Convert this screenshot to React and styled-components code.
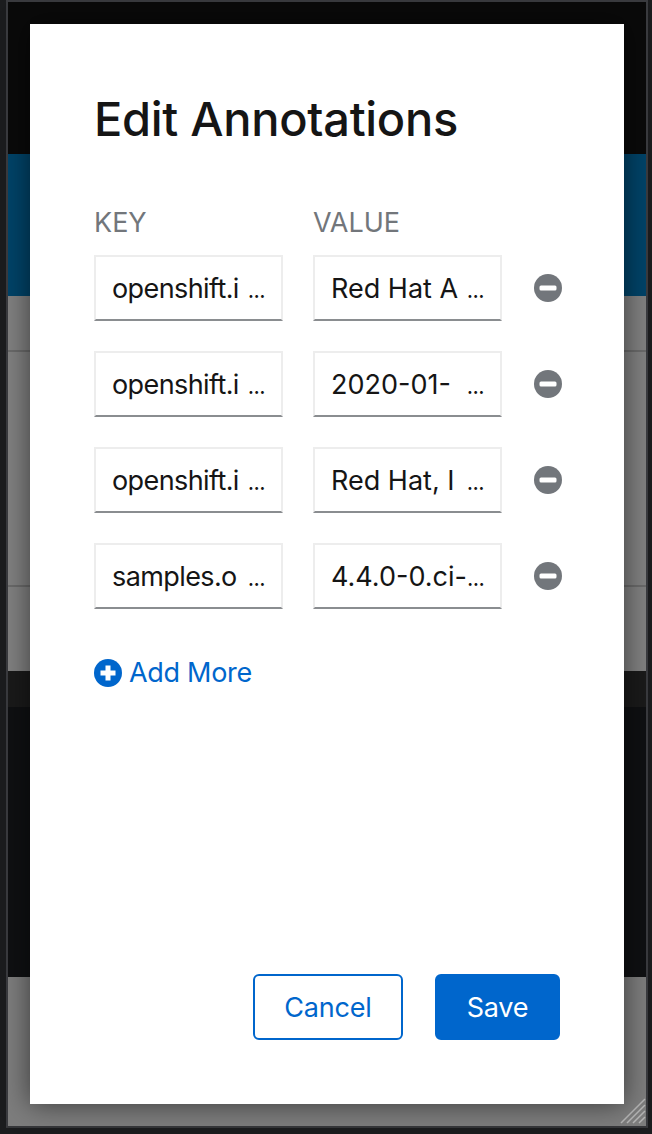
import React from 'react'
import styled, { createGlobalStyle } from 'styled-components'

const GlobalStyle = createGlobalStyle`
  html, body {
    margin: 0;
    padding: 0;
    background: #1b1c1e;
  }
  body {
    font-family: Inter, "Liberation Sans", sans-serif;
  }
`

const Frame = styled.div`
  position: relative;
  width: 652px;
  height: 1134px;
  box-sizing: border-box;
  padding: 0 4px 0 6px;
  background: #1b1c1e;
  overflow: hidden;
`

const Backdrop = styled.div`
  height: 1128px;
  box-sizing: border-box;
  display: flex;
  flex-direction: column;
  border: 2px solid #3a3b3f;
  border-bottom: 2px solid #36373a;
`

const Band = styled.div`
  height: ${(props) => props.h}px;
  flex: none;
  background: ${(props) => props.bg};
  ${(props) => props.line && 'border-bottom: 2px solid #6a6a6a; box-sizing: border-box;'}
`

const Dialog = styled.div`
  position: absolute;
  left: 30px;
  top: 24px;
  width: 594px;
  height: 1080px;
  box-sizing: border-box;
  padding: 68px 64px 64px;
  display: flex;
  flex-direction: column;
  background: #fff;
  box-shadow: 0 0 26px rgba(3, 3, 3, 0.55);
`

const Title = styled.h1`
  margin: 0;
  font-size: 47px;
  line-height: 54px;
  font-weight: 500;
  letter-spacing: -0.3px;
  color: #151515;
`

const Grid = styled.div`
  margin-top: 59px;
  display: grid;
  grid-template-columns: 189px 189px 28px;
  column-gap: 30px;
  row-gap: 30px;
  align-items: center;
`

const HeadRow = styled.div`
  display: contents;
`

const Label = styled.div`
  height: 36px;
  margin-bottom: -16px;
  font-size: 27px;
  line-height: 36px;
  color: #72767b;
`

const Field = styled.div`
  height: 66px;
  box-sizing: border-box;
  padding: 0 16px 0 16px;
  display: flex;
  align-items: center;
  justify-content: space-between;
  border: 2px solid #ededed;
  border-bottom-color: #8a8d90;
  font-size: 27px;
  letter-spacing: ${(props) => (props.narrow ? '-0.6px' : '0')};
  color: #151515;
  white-space: nowrap;
  overflow: hidden;
`

const Dots = styled.span`
  flex: none;
  font-size: 22px;
  letter-spacing: -0.6px;
  align-self: center;
  padding-top: 3px;
`

const RemoveBtn = styled.button`
  width: 28px;
  height: 28px;
  margin-left: 2px;
  padding: 0;
  border: 0;
  background: none;
  display: block;
`

const AddLink = styled.div`
  margin-top: 47px;
  display: flex;
  align-items: center;
  gap: 7px;
  font-size: 27px;
  line-height: 34px;
  letter-spacing: -0.3px;
  color: #06c;
`

const Footer = styled.div`
  margin-top: auto;
  display: flex;
  justify-content: flex-end;
  gap: 32px;
`

const Button = styled.button`
  height: 66px;
  width: ${(props) => props.w}px;
  padding: 0;
  box-sizing: border-box;
  border-radius: 6px;
  border: 2px solid #06c;
  background: ${(props) => (props.primary ? '#06c' : '#fff')};
  color: ${(props) => (props.primary ? '#fff' : '#06c')};
  font-family: inherit;
  font-size: 27px;
  letter-spacing: -0.2px;
`

const Grip = styled.svg`
  position: absolute;
  right: 6px;
  bottom: 10px;
  width: 26px;
  height: 26px;
`

const rows = [
  ['openshift.i', 'Red Hat A'],
  ['openshift.i', '2020-01-'],
  ['openshift.i', 'Red Hat, I'],
  ['samples.o', '4.4.0-0.ci-'],
]

const MinusIcon = () => (
  <svg width="28" height="28" viewBox="0 0 28 28">
    <circle cx="14" cy="14" r="14" fill="#72767b" />
    <rect x="5.5" y="11.5" width="17" height="5" rx="1.5" fill="#fff" />
  </svg>
)

const PlusIcon = () => (
  <svg width="28" height="28" viewBox="0 0 28 28">
    <circle cx="14" cy="14" r="14" fill="#06c" />
    <path d="M11.5 6.5h5v5h5v5h-5v5h-5v-5h-5v-5h5z" fill="#fff" />
  </svg>
)

const App = () => {
  return (
    <>
      <GlobalStyle />
      <Frame>
        <Backdrop>
          <Band h={152} bg="#0a0a0a" />
          <Band h={142} bg="#004368" />
          <Band h={56} bg="#808080" line />
          <Band h={235} bg="#808080" line />
          <Band h={84} bg="#808080" />
          <Band h={36} bg="#1a1a1a" />
          <Band h={270} bg="#0f1012" />
          <Band h={149} bg="#7d7d7d" />
        </Backdrop>
        <Grip viewBox="0 0 26 26">
          <path
            d="M25 1 1 25M25 7 7 25M25 13 13 25M25 19 19 25"
            stroke="#b5b5b5"
            strokeWidth="1.5"
          />
        </Grip>
        <Dialog>
          <Title>Edit Annotations</Title>
          <Grid>
            <HeadRow>
              <Label>KEY</Label>
              <Label>VALUE</Label>
              <span />
            </HeadRow>
            {rows.map((row, i) => (
              <React.Fragment key={i}>
                <Field narrow>
                  {row[0]}
                  <Dots>...</Dots>
                </Field>
                <Field>
                  {row[1]}
                  <Dots>...</Dots>
                </Field>
                <RemoveBtn>
                  <MinusIcon />
                </RemoveBtn>
              </React.Fragment>
            ))}
          </Grid>
          <AddLink>
            <PlusIcon />
            Add More
          </AddLink>
          <Footer>
            <Button w={150}>Cancel</Button>
            <Button w={125} primary>
              Save
            </Button>
          </Footer>
        </Dialog>
      </Frame>
    </>
  )
}

export default App
